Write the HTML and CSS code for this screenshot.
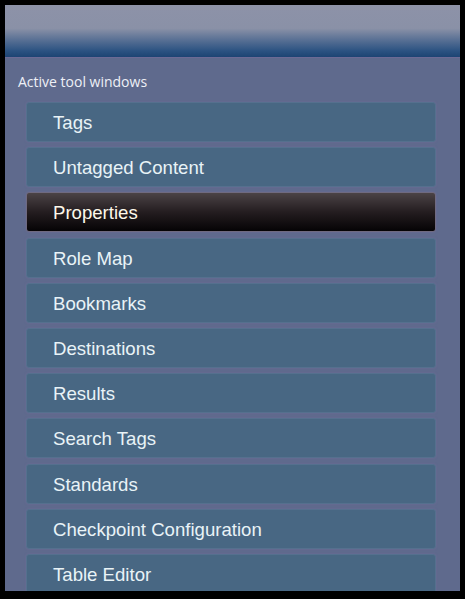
FILE: index.html
```html
<!DOCTYPE html>
<html lang="en">
<head>
  <meta charset="UTF-8" />
  <meta name="viewport" content="width=device-width, initial-scale=1.0" />
  <title>Active tool windows</title>
  <link rel="stylesheet" href="styles.css">
</head>
<body>
  <div class="window">
    <header class="titlebar"></header>
    <div class="panel">
      <div class="caption">Active tool windows</div>
      <ul class="tools">
        <li class="tool">Tags</li>
        <li class="tool">Untagged Content</li>
        <li class="tool active">Properties</li>
        <li class="tool">Role Map</li>
        <li class="tool">Bookmarks</li>
        <li class="tool">Destinations</li>
        <li class="tool">Results</li>
        <li class="tool">Search Tags</li>
        <li class="tool">Standards</li>
        <li class="tool">Checkpoint Configuration</li>
        <li class="tool">Table Editor</li>
      </ul>
    </div>
  </div>
</body>
</html>
```

FILE: styles.css
```css
body {
  margin: 0;
  background: #000;
  width: 465px;
  height: 599px;
  overflow: hidden;
}
.window {
  margin: 5px;
  width: 455px;
  height: 586px;
  overflow: hidden;
  background: #5f6a8d;
}
.titlebar {
  height: 52px;
  background: linear-gradient(to bottom, #8d92a8 0%, #8a91a7 45%, #5d7396 65%, #2c5382 88%, #1d4473 100%);
  border-bottom: 1px solid #6c6a95;
}
.panel {
  padding: 15px 24px 0 21px;
}
.caption {
  margin-left: -8px;
  height: 18px;
  line-height: 18px;
  margin-bottom: 11px;
  font-family: "Open Sans", "DejaVu Sans", sans-serif;
  font-size: 14px;
  color: #eef0f6;
}
.tools {
  list-style: none;
  margin: 0;
  padding: 0;
}
.tool {
  height: 38px;
  line-height: 40px;
  margin-bottom: 5.2px;
  padding-left: 26px;
  background: #486783;
  border: 1px solid #55708e;
  border-radius: 3px;
  font-family: "Liberation Sans", Arial, sans-serif;
  font-size: 18.6px;
  color: #e9f3f7;
  box-shadow: 0 0 2px #6e6c98;
}
.tool.active {
  background: linear-gradient(to bottom, #4b4346 0%, #241d20 50%, #050305 100%);
  border-color: #6f6a80;
  color: #fdf8ea;
}
```
